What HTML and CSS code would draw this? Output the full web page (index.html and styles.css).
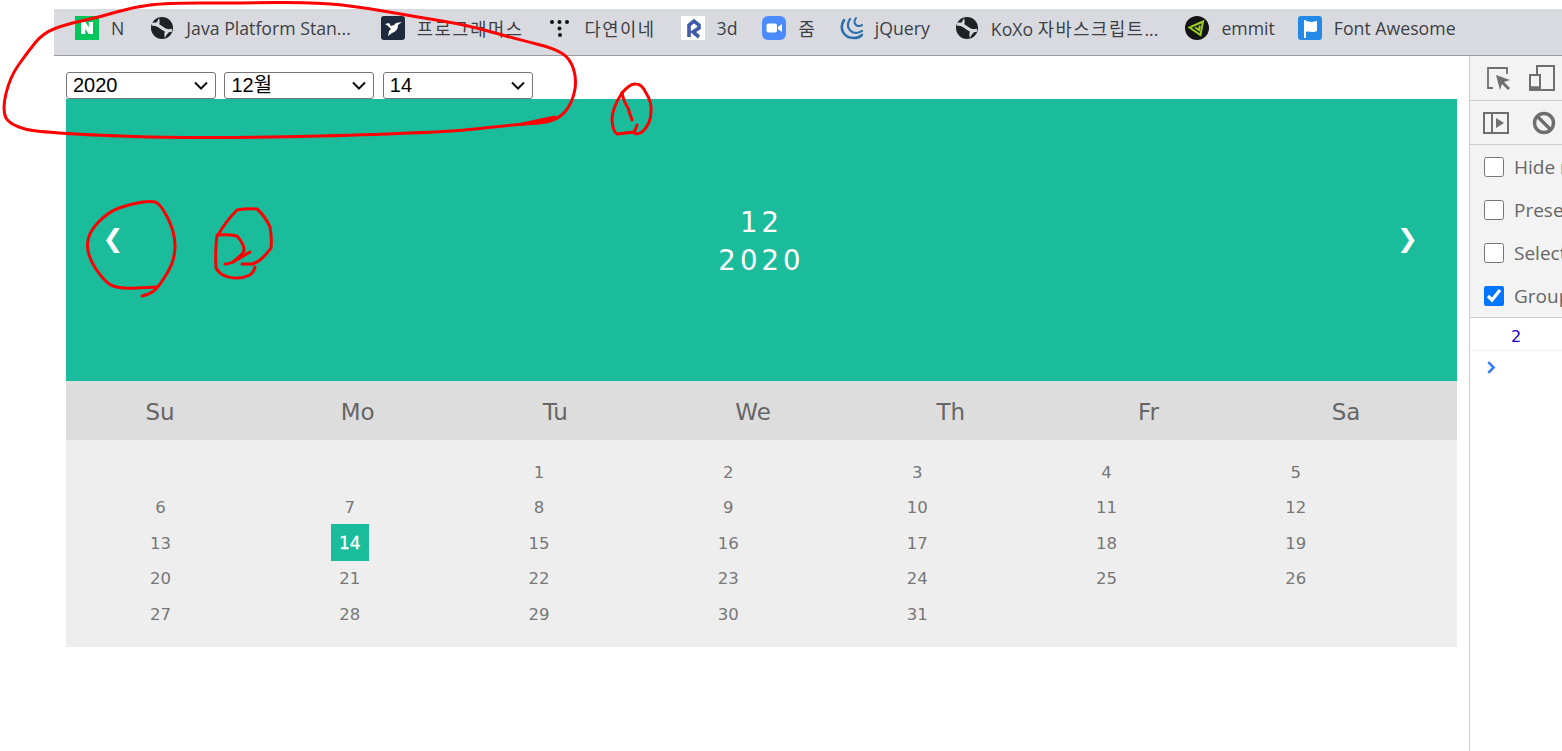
FILE: index.html
```html
<!DOCTYPE html>
<html lang="ko">
<head>
<meta charset="utf-8">
<title>Calendar</title>
<link rel="stylesheet" href="styles.css">
</head>
<body>
<div class="bookmarks">
  <a class="bm plus-1"><svg class="ico" viewBox="0 0 24 24"><rect width="24" height="24" fill="#03c75a"/><path d="M6 6h4.400l3.400 5.200V6H18v12h-4.400l-3.400-5.200V18H6z" fill="#fff"/></svg><span>N</span></a>
  <a class="bm plus-5"><svg class="ico" viewBox="0 0 24 24"><circle cx="12" cy="12" r="11" fill="#202124"/><path d="M2 8.500C6 7 9 9.500 12 12s6 3.500 10 2" fill="none" stroke="#d9dadf" stroke-width="3"/><path d="M4 9c2-2 4-4 5-7 1 3 1 6-1 8zM20 15c-2 2-4 4-5 7-1-3-1-6 1-8z" fill="#d9dadf"/></svg><span>Java Platform Stan...</span></a>
  <a class="bm"><svg class="ico" viewBox="0 0 24 24"><rect width="24" height="24" rx="3" fill="#1e2a3e"/><path d="M4 8l4-1 2 3 3-1 2-2 6-1-4 3c0 5-3 7-6 8l-4 3 1-5 2-2-3-3z" fill="#fff"/></svg><span class="ko">프로그래머스</span></a>
  <a class="bm"><svg class="ico" viewBox="0 0 24 24" fill="#111"><circle cx="4" cy="6" r="2"/><circle cx="11.500" cy="6" r="2"/><circle cx="19" cy="6" r="2"/><circle cx="11.500" cy="12.500" r="2"/><circle cx="12" cy="19" r="2"/></svg><span class="ko">다연이네</span></a>
  <a class="bm"><svg class="ico" viewBox="0 0 24 24"><rect width="24" height="24" fill="#fff"/><path d="M8 21V9l5-4 5 4v3l-6 4 6 5" fill="none" stroke="#3f5ba9" stroke-width="3.600"/></svg><span>3d</span></a>
  <a class="bm minus-1"><svg class="ico" viewBox="0 0 24 24"><rect width="24" height="24" rx="6" fill="#4a8cff"/><rect x="4.500" y="7.500" width="10.500" height="9" rx="2" fill="#fff"/><path d="M16 11l4-3v8l-4-3z" fill="#fff"/></svg><span>줌</span></a>
  <a class="bm"><svg class="ico" viewBox="0 0 24 24" fill="none" stroke="#2b6fad" stroke-linecap="round"><path d="M5 4C0 12 4 22 15 22c3 0 6-1 8-3" stroke-width="2.600"/><path d="M11 3c-4 6-2 13 6 14 2 0 4-1 6-2" stroke-width="2.200"/><path d="M17 2c-3 4-1 8 3 8 1 0 2 0 3-1" stroke-width="2"/></svg><span>jQuery</span></a>
  <a class="bm plus-2"><svg class="ico" viewBox="0 0 24 24"><circle cx="12" cy="12" r="11" fill="#202124"/><path d="M2 8.500C6 7 9 9.500 12 12s6 3.500 10 2" fill="none" stroke="#d9dadf" stroke-width="3"/><path d="M4 9c2-2 4-4 5-7 1 3 1 6-1 8zM20 15c-2 2-4 4-5 7-1-3-1-6 1-8z" fill="#d9dadf"/></svg><span>KoXo <span class="ko">자바스크립트</span>...</span></a>
  <a class="bm minus-2"><svg class="ico" viewBox="0 0 24 24"><circle cx="12" cy="12" r="12" fill="#141414"/><path d="M4.500 11.500L18 5.500 15.500 19zM10 11.500l4 2.500 .8-4.500" fill="none" stroke="#9ccc26" stroke-width="2"/></svg><span>emmit</span></a>
  <a class="bm"><svg class="ico" viewBox="0 0 24 24"><rect width="24" height="24" rx="3" fill="#228ae6"/><path d="M6 4h2v1.500c3-1 4 .5 6 .5s3-1 5-1v10c-2 1-3 1-5 1s-4-1-6 0v6H6z" fill="#fff"/></svg><span>Font Awesome</span></a>
</div>

<div class="workspace">
  <main class="page">
    <div class="pickers">
      <select class="pick"><option>2020</option></select>
      <select class="pick"><option>12월</option></select>
      <select class="pick"><option>14</option></select>
    </div>
    <section class="month">
      <span class="arrow prev">❮</span>
      <div class="title"><div>12</div><div>2020</div></div>
      <span class="arrow next">❯</span>
    </section>
    <div class="weekdays">
      <span>Su</span><span>Mo</span><span>Tu</span><span>We</span><span>Th</span><span>Fr</span><span>Sa</span>
    </div>
    <div class="days">
      <span></span><span></span><span>1</span><span>2</span><span>3</span><span>4</span><span>5</span>
      <span>6</span><span>7</span><span>8</span><span>9</span><span>10</span><span>11</span><span>12</span>
      <span>13</span><span><b class="today">14</b></span><span>15</span><span>16</span><span>17</span><span>18</span><span>19</span>
      <span>20</span><span>21</span><span>22</span><span>23</span><span>24</span><span>25</span><span>26</span>
      <span>27</span><span>28</span><span>29</span><span>30</span><span>31</span>
    </div>
  </main>

  <aside class="devtools">
    <div class="tool-row">
      <svg class="tool" viewBox="0 0 26 26" fill="none" stroke="#6e6e6e" stroke-width="1.800"><path d="M8 23H3V3h19v6"/><path d="M11 10l14 5-6 2 6 6-2 2-6-6-2 6z" fill="#6e6e6e" stroke="none"/></svg>
      <svg class="tool wide" viewBox="0 0 26 26" fill="none" stroke="#6e6e6e" stroke-width="2"><path d="M8 10V1h17v24H1V10h10v15"/><path d="M1 23h10" stroke-width="3.500"/></svg>
    </div>
    <div class="tool-row">
      <svg class="tool" viewBox="0 0 26 26" fill="none" stroke="#6e6e6e" stroke-width="2"><rect x="1" y="3" width="24" height="20"/><path d="M9 3v20"/><path d="M13 8l8 5-8 5z" fill="#6e6e6e" stroke="none"/></svg>
      <svg class="tool" viewBox="0 0 26 26" fill="none" stroke="#6e6e6e" stroke-width="3.400"><circle cx="13" cy="13" r="9.500"/><path d="M6.500 6.500l13 13"/></svg>
    </div>
    <div class="checks">
      <label class="check"><input type="checkbox"><span>Hide network</span></label>
      <label class="check"><input type="checkbox"><span>Preserve log</span></label>
      <label class="check"><input type="checkbox"><span>Selected context only</span></label>
      <label class="check"><input type="checkbox" checked><span>Group similar</span></label>
    </div>
    <div class="log">2</div>
    <svg class="prompt" viewBox="0 0 10 14" fill="none" stroke="#367cf1" stroke-width="2.400"><path d="M2 2l5 5-5 5"/></svg>
  </aside>
</div>

<svg class="ink" viewBox="0 0 1562 751" fill="none" stroke="#f00" stroke-width="3" stroke-linecap="round" stroke-linejoin="round">
  <path d="M6 118Q2 110 6 93.500Q10 77 18.500 65Q27 53 35 43Q43 33 55 28.500Q67 24 83.500 20.500Q100 17 116.500 12Q133 7 150 5Q167 3 200 3Q233 3 275 2.500Q317 2 342 5Q367 8 392 12.500Q417 17 442 21Q467 25 493.500 32.500Q520 40 536.500 44Q553 48 561.500 53Q570 58 573.500 69Q577 80 574.500 91.500Q572 103 566 110.500Q560 118 551.500 120.500Q543 123 531.500 123.500Q520 124 480 128.500Q440 133 320 136Q200 139 120 136Q40 133 25 129Q10 125 6 118"/>
  <path d="M522 124L555 117"/>
  <path d="M622 93Q630 83 636 84Q642 84 646 93Q652 102 651 112Q651 124 642 132Q637 135 634 133L637 125"/>
  <path d="M622 93Q612 108 612 120Q613 132 617 134Q625 133 634 132"/>
  <path d="M622 93Q624 102 628 108L632 120"/>
  <path d="M142 296L147 294.500Q152 293 156 289Q160 285 167.500 272.500Q175 260 175 246Q175 232 167.500 217.500Q160 203 155 202Q150 201 140 202.500Q130 204 119 208Q108 212 98 222.500Q88 233 87.500 244Q87 255 95 267.500Q103 280 110 284.500Q117 289 137 288L157 287"/>
  <path d="M218 235Q226 221 237 210Q247 208 257 209Q265 216 270 227Q272 238 271 248Q266 255 260 260Q256 263 252 264L242 264"/>
  <path d="M255 267Q254 272 250 275Q244 278 237 278Q229 278 223 275Q218 272 216 268Q215 250 217 235Q228 234 237 236Q241 240 243 245Q245 250 243 253Q238 258 233 262Q229 264 225 264"/>
  <path d="M233 262L250 252"/>
</svg>
</body>
</html>
```

FILE: styles.css
```css
* { box-sizing: border-box; }

html, body { margin: 0; height: 100%; }

body {
  height: 751px;
  overflow: hidden;
  padding: 9px 0 0 54px;
  background: #fff;
  font-family: "Liberation Sans", "Noto Sans CJK KR", sans-serif;
}

.bookmarks {
  display: flex;
  align-items: flex-start;
  gap: 25px;
  height: 47px;
  padding: 7px 0 0 21px;
  background: #d9dae0;
  border-bottom: 1px solid #9b9b9f;
  font: 17.700px "Open Sans", "Noto Sans CJK KR", sans-serif;
  color: #3c3f44;
  white-space: nowrap;
}

.bm { display: flex; align-items: center; gap: 12px; height: 24px; }

.plus-1 { margin-right: 1px; }
.plus-2 { margin-right: 2px; }
.plus-5 { margin-right: 5px; }
.minus-1 { margin-right: -1px; }
.minus-2 { margin-right: -2px; }

.ko { letter-spacing: 1.500px; }

.ico { width: 24px; height: 24px; flex: none; }

.workspace { display: flex; height: 695px; }

.page { flex: 0 0 1415px; padding: 16px 12px 0; }

.pickers { display: flex; gap: 8.400px; height: 27px; }

.pick {
  appearance: none;
  width: 150px;
  height: 27px;
  padding: 0 6px 2px;
  font: 20px "Liberation Sans", "Noto Sans CJK KR", sans-serif;
  background: #fff url("data:image/svg+xml,%3Csvg xmlns='http://www.w3.org/2000/svg' width='14' height='9' viewBox='0 0 14 9'%3E%3Cpath d='M1 1.500l6 6 6-6' fill='none' stroke='%23111' stroke-width='2'/%3E%3C/svg%3E") no-repeat right 7px center;
  border: 1px solid #767676;
  border-radius: 3px;
  color: #000;
}

.month {
  display: grid;
  grid-template-columns: 1fr auto 1fr;
  align-items: center;
  height: 282px;
  padding: 0 38px;
  background: #1abc9c;
  color: #fff;
  font-family: "DejaVu Sans", sans-serif;
}

.arrow { font-size: 25px; line-height: 1; margin-bottom: 4px; }

.prev { justify-self: start; margin-left: -1.500px; }

.next { justify-self: end; margin-right: 1px; }

.title {
  font-size: 27.500px;
  line-height: 38px;
  letter-spacing: 4.100px;
  text-align: center;
  margin-top: 2px;
}

.weekdays {
  display: grid;
  grid-template-columns: repeat(7, 188px);
  column-gap: 9.700px;
  align-items: center;
  height: 59px;
  padding-top: 2px;
  background: #ddd;
  color: #666;
  font: 23px "DejaVu Sans", sans-serif;
  text-align: center;
}

.days {
  display: grid;
  grid-template-columns: repeat(7, 189.200px);
  grid-auto-rows: 35.500px;
  height: 207px;
  padding-top: 14.500px;
  background: #eee;
  color: #777;
  font: 16.500px "DejaVu Sans", sans-serif;
}

.days span { display: flex; align-items: center; justify-content: center; }

.today {
  display: flex;
  flex: none;
  align-items: center;
  justify-content: center;
  width: 38px;
  height: 37px;
  margin-bottom: 1px;
  background: #1abc9c;
  color: #fff;
  font-size: 17px;
  font-weight: 400;
  -webkit-text-stroke: 0.3px #fff;
}

.devtools {
  flex: 1;
  min-width: 0;
  overflow: hidden;
  border-left: 1px solid #ccc;
  font: 19px "Open Sans", sans-serif;
  color: #666;
  white-space: nowrap;
}

.tool-row {
  display: flex;
  align-items: center;
  gap: 18px;
  height: 45px;
  padding-left: 15px;
  background: #f3f3f3;
  border-bottom: 1px solid #ccc;
}

.tool-row + .tool-row { height: 44px; padding-left: 13px; gap: 22px; }

.tool { width: 26px; height: 26px; flex: none; }

.checks {
  display: flex;
  flex-direction: column;
  padding: 1px 0 0 14px;
  height: 173px;
  background: #f3f3f3;
  border-bottom: 1px solid #ccc;
}

.check { display: flex; align-items: center; gap: 10px; height: 43px; }

.check input { width: 20px; height: 20px; margin: 0; flex: none; accent-color: #0075ff; }

.log {
  height: 33px;
  padding-left: 41px;
  border-bottom: 1px solid #f0f0f0;
  font: 16px/37px "DejaVu Sans", sans-serif;
  color: #1a00c8;
}

.prompt { display: block; width: 11px; height: 15px; margin: 9px 0 0 16px; }

.ink { position: absolute; inset: 0; width: 1562px; height: 751px; pointer-events: none; }
```
